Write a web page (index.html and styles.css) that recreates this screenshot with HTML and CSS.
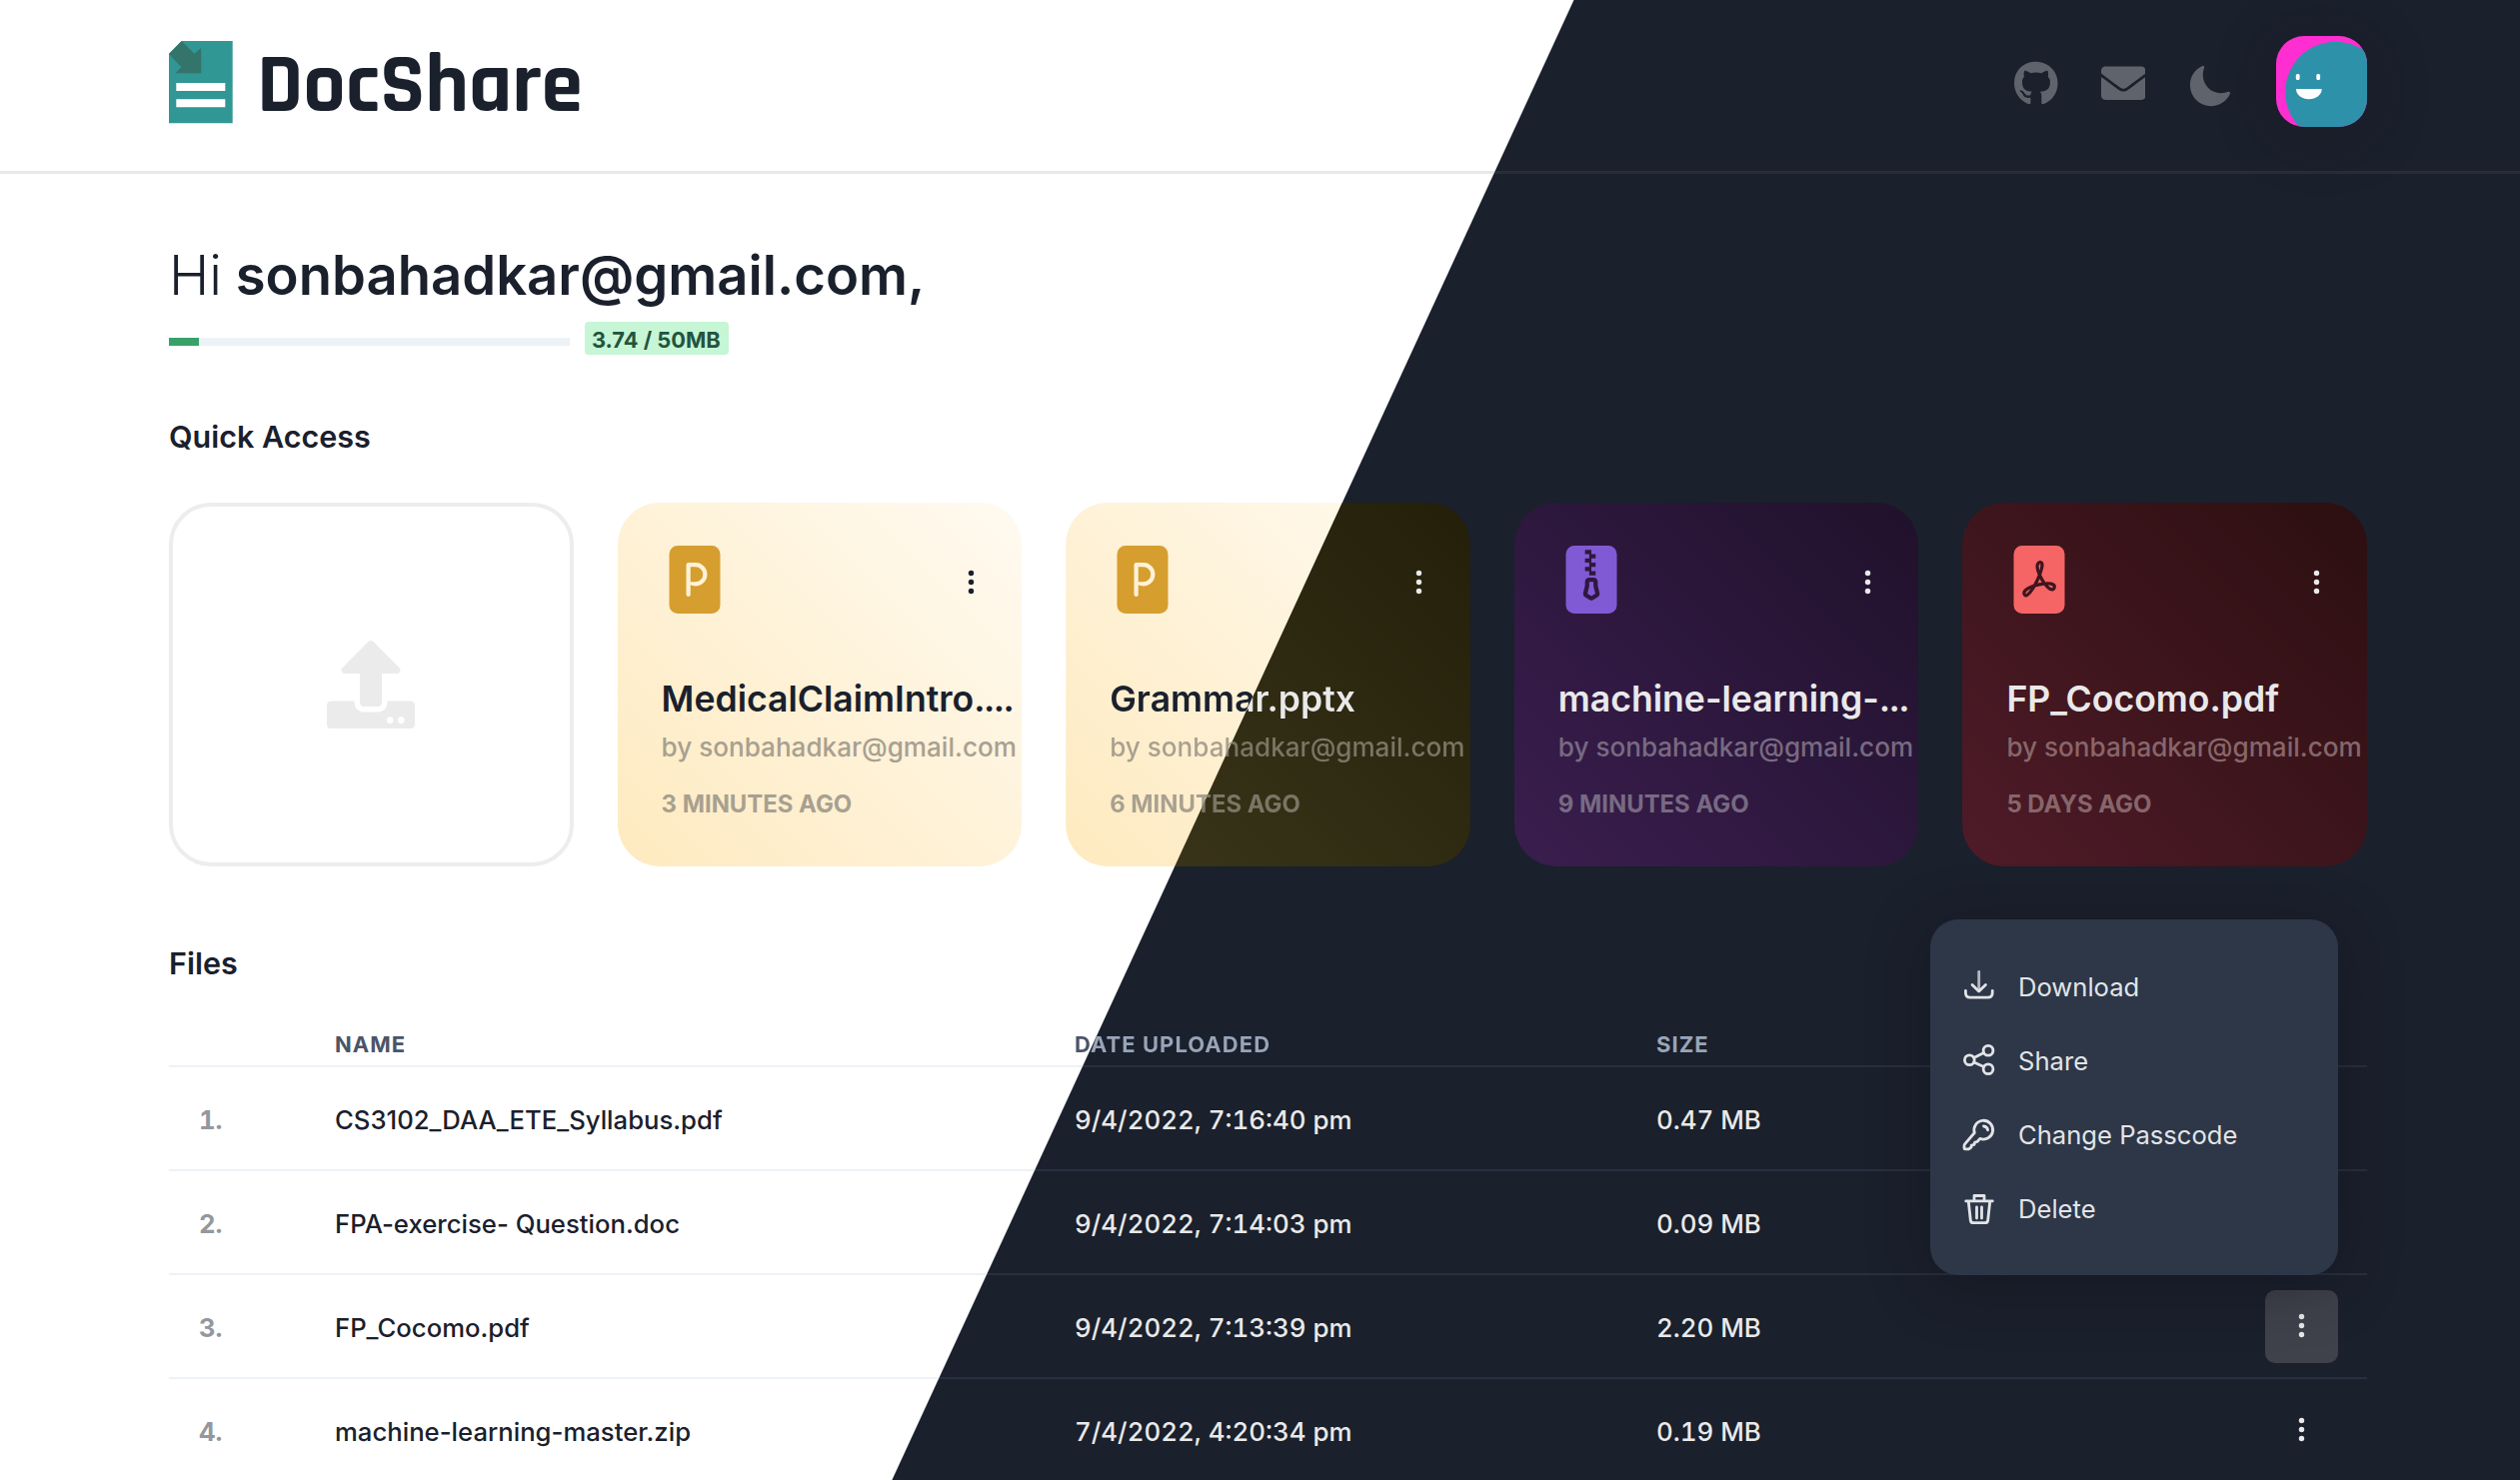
FILE: index.html
```html
<!DOCTYPE html>
<html lang="en">
<head>
<meta charset="utf-8">
<title>DocShare</title>
<link rel="stylesheet" href="styles.css">
</head>
<body>
<svg class="sprite" aria-hidden="true">
  <symbol id="dots" viewBox="0 0 16 16"><circle cx="8" cy="3" r="1.5"/><circle cx="8" cy="8" r="1.5"/><circle cx="8" cy="13" r="1.5"/></symbol>
  <symbol id="ppt" viewBox="0 0 16 16">
    <path fill-rule="evenodd" d="M4 0h8a2 2 0 0 1 2 2v12a2 2 0 0 1-2 2H4a2 2 0 0 1-2-2V2a2 2 0 0 1 2-2zM6.5 4a.5.5 0 0 0-.5.5V11.500a.5.5 0 0 0 1 0V9.236c.314.171.68.264 1.188.264a2.75 2.75 0 1 0 0-5.500H6.500zM8.188 8.500H7V5h1.188a1.750 1.750 0 1 1 0 3.500z"/>
  </symbol>
</svg>

<header class="header">
  <a class="brand">
    <svg class="brand-mark" viewBox="0 0 64 82.500">
      <path fill="#319795" d="M12.700 0H63.700V82.300H0V12.700z"/>
      <path fill="#33756a" d="M12.700 0 25.300 12.700 32.300 7V32.300H6.300L12.300 26.300 0 13z"/>
      <path fill="#fff" d="M7.300 42h49v8h-49zM7.300 58.300h49v8h-49z"/>
    </svg>
    <span class="brand-name">DocShare</span>
  </a>
  <nav class="nav">
    <svg class="nav-github" viewBox="0 0 496 512"><path d="M165.9 397.4c0 2-2.3 3.6-5.2 3.6-3.3.3-5.6-1.3-5.600-3.600 0-2 2.300-3.600 5.200-3.600 3-.3 5.600 1.300 5.600 3.600zm-31.100-4.500c-.7 2 1.300 4.300 4.300 4.900 2.600 1 5.600 0 6.200-2s-1.300-4.300-4.300-5.200c-2.600-.7-5.500.3-6.200 2.300zm44.200-1.700c-2.900.7-4.900 2.600-4.600 4.900.3 2 2.900 3.300 5.900 2.600 2.900-.7 4.900-2.600 4.600-4.600-.3-1.900-3-3.200-5.900-2.900zM244.800 8C106.100 8 0 113.300 0 252c0 110.900 69.800 205.800 169.500 239.200 12.800 2.300 17.300-5.600 17.300-12.100 0-6.200-.3-40.400-.3-61.400 0 0-70 15-84.700-29.800 0 0-11.400-29.100-27.800-36.600 0 0-22.900-15.700 1.600-15.400 0 0 24.900 2 38.600 25.800 21.900 38.600 58.600 27.500 72.900 20.900 2.300-16 8.800-27.100 16-33.700-55.900-6.200-112.300-14.300-112.300-110.500 0-27.500 7.600-41.300 23.600-58.900-2.600-6.500-11.100-33.300 2.600-67.900 20.900-6.500 69 27 69 27 20-5.600 41.500-8.500 62.800-8.500s42.800 2.900 62.800 8.500c0 0 48.100-33.600 69-27 13.700 34.700 5.200 61.400 2.600 67.900 16 17.700 25.800 31.500 25.800 58.900 0 96.500-58.900 104.200-114.800 110.500 9.200 7.900 17 22.900 17 46.400 0 33.700-.3 75.400-.3 83.600 0 6.500 4.600 14.400 17.300 12.100C428.200 457.800 496 362.900 496 252 496 113.300 383.500 8 244.800 8z"/></svg>
    <svg class="nav-mail" viewBox="0 0 512 512"><path d="M502.300 190.800c3.900-3.100 9.700-.2 9.700 4.700V400c0 26.500-21.500 48-48 48H48c-26.500 0-48-21.500-48-48V195.600c0-5 5.700-7.800 9.700-4.700 22.400 17.400 52.100 39.500 154.100 113.600 21.100 15.400 56.700 47.800 92.200 47.600 35.700.3 72-32.800 92.300-47.600 102-74.100 131.600-96.300 154-113.700zM256 320c23.200.4 56.600-29.200 73.400-41.400 132.700-96.300 142.800-104.700 173.400-128.700 5.800-4.500 9.200-11.500 9.200-18.900v-19c0-26.500-21.500-48-48-48H48c-26.500 0-48 21.500-48 48v19c0 7.400 3.400 14.300 9.200 18.900 30.600 23.900 40.700 32.400 173.400 128.700 16.800 12.200 50.200 41.800 73.400 41.400z"/></svg>
    <svg class="nav-moon" viewBox="0 0 512 512"><path d="M264 480A232 232 0 0132 248c0-94 54-178.280 137.610-214.670a16 16 0 0121.060 21.060C181.070 76.430 176 104.660 176 136c0 110.280 89.720 200 200 200 31.340 0 59.570-5.070 81.610-14.670a16 16 0 0121.060 21.060C442.280 426 358 480 264 480z"/></svg>
    <svg class="avatar" viewBox="0 0 91 91">
      <rect width="91" height="91" fill="#ff2ed0"/>
      <circle cx="59.500" cy="56" r="50.300" fill="#2e91aa"/>
      <rect x="19.800" y="38" width="3.800" height="6" rx="1.500" fill="#fff"/>
      <rect x="40.300" y="38" width="3.800" height="6" rx="1.500" fill="#fff"/>
      <path d="M20 53H45.700A12.850 10.300 0 0 1 20 53z" fill="#fff"/>
    </svg>
  </nav>
</header>
<div class="header-line"></div>

<main class="main">
  <h1 class="greeting"><span class="greeting-hi">Hi</span> sonbahadkar@gmail.com,</h1>
  <div class="storage">
    <div class="meter"><div class="meter-fill" style="width:7.4%"></div></div>
    <span class="badge">3.74 / 50MB</span>
  </div>

  <h2 class="section-title">Quick Access</h2>
  <section class="cards">
    <button class="upload">
      <svg viewBox="0 0 512 512"><path d="M296 384h-80c-13.300 0-24-10.700-24-24V192h-87.700c-17.800 0-26.700-21.500-14.100-34.100L242.300 5.700c7.500-7.500 19.800-7.500 27.300 0l152.200 152.200c12.600 12.600 3.700 34.100-14.100 34.100H320v168c0 13.300-10.700 24-24 24zm216-8v112c0 13.300-10.700 24-24 24H24c-13.300 0-24-10.700-24-24V376c0-13.300 10.700-24 24-24h136v8c0 30.900 25.100 56 56 56h80c30.900 0 56-25.100 56-56v-8h136c13.300 0 24 10.700 24 24zm-124 88c0-11-9-20-20-20s-20 9-20 20 9 20 20 20 20-9 20-20zm64 0c0-11-9-20-20-20s-20 9-20 20 9 20 20 20 20-9 20-20z"/></svg>
    </button>
    <article class="card card-ppt">
      <div class="card-top"><svg class="file-icon"><use href="#ppt"/></svg><svg class="dots"><use href="#dots"/></svg></div>
      <h3 class="card-title">MedicalClaimIntro<span class="clip-dots">....</span></h3>
      <p class="card-owner">by sonbahadkar@gmail.com</p>
      <p class="card-time">3 MINUTES AGO</p>
    </article>
    <article class="card card-split">
      <div class="card-top"><svg class="file-icon"><use href="#ppt"/></svg><svg class="dots"><use href="#dots"/></svg></div>
      <h3 class="card-title">Grammar.pptx</h3>
      <p class="card-owner">by sonbahadkar@gmail.com</p>
      <p class="card-time">6 MINUTES AGO</p>
    </article>
    <article class="card card-zip dark">
      <div class="card-top">
        <svg class="file-icon" viewBox="0 0 16 16"><path d="M8.500 9.438V8.500h-1v.938a1 1 0 0 1-.03.243l-.4 1.598.93.62.93-.62-.4-1.598a1 1 0 0 1-.03-.243z"/><path fill-rule="evenodd" d="M4 0h8a2 2 0 0 1 2 2v12a2 2 0 0 1-2 2H4a2 2 0 0 1-2-2V2a2 2 0 0 1 2-2zm2.500 8.500v.938l-.4 1.599a1 1 0 0 0 .416 1.074l.93.62a1 1 0 0 0 1.109 0l.93-.62a1 1 0 0 0 .415-1.074l-.4-1.599V8.500a1 1 0 0 0-1-1h-1a1 1 0 0 0-1 1zm1-5.500h-1v1h1v1h-1v1h1v1H9V6H8V5h1V4H8V3h1V2H8V1H6.500v1h1v1z"/></svg>
        <svg class="dots"><use href="#dots"/></svg>
      </div>
      <h3 class="card-title">machine-learning-<span class="clip-dots">...</span></h3>
      <p class="card-owner">by sonbahadkar@gmail.com</p>
      <p class="card-time">9 MINUTES AGO</p>
    </article>
    <article class="card card-pdf dark">
      <div class="card-top">
        <svg class="file-icon" viewBox="0 0 16 16"><path d="M5.523 10.424c.14-.082.293-.162.459-.238a7.878 7.878 0 0 1-.45.606c-.28.337-.498.516-.635.572a.266.266 0 0 1-.035.012.282.282 0 0 1-.026-.044c-.056-.11-.054-.216.04-.36.106-.165.319-.354.647-.548zm2.455-1.647c-.119.025-.237.05-.356.078a21.035 21.035 0 0 0 .5-1.050 11.960 11.960 0 0 0 .51.858c-.217.032-.436.07-.654.114zm2.525.939a3.888 3.888 0 0 1-.435-.41c.228.005.434.022.612.054.317.057.466.147.518.209a.095.095 0 0 1 .026.064.436.436 0 0 1-.06.2.307.307 0 0 1-.094.124.107.107 0 0 1-.069.015c-.09-.003-.258-.066-.498-.256zM8.278 4.970c-.04.244-.108.524-.2.829a4.860 4.860 0 0 1-.089-.346c-.076-.353-.087-.63-.046-.822.038-.177.11-.248.196-.283a.517.517 0 0 1 .145-.04c.013.03.028.092.032.198.005.122-.007.277-.038.465z"/><path fill-rule="evenodd" d="M4 0h8a2 2 0 0 1 2 2v12a2 2 0 0 1-2 2H4a2 2 0 0 1-2-2V2a2 2 0 0 1 2-2zm.165 11.668c.09.18.23.343.438.419.207.075.412.04.58-.03.318-.13.635-.436.933-.794.333-.401.683-.927 1.021-1.510a11.640 11.640 0 0 1 1.997-.406c.3.383.61.713.91.95.28.22.603.403.934.417a.856.856 0 0 0 .51-.138c.155-.101.27-.247.354-.416.09-.181.145-.37.138-.563a.844.844 0 0 0-.2-.518c-.226-.27-.596-.4-.96-.465a5.760 5.760 0 0 0-1.335-.05 10.954 10.954 0 0 1-.98-1.686c.25-.66.437-1.284.52-1.794.036-.218.055-.426.048-.614a1.238 1.238 0 0 0-.127-.538.7.7 0 0 0-.477-.365c-.202-.043-.41 0-.601.077-.377.15-.576.47-.651.823-.073.34-.04.736.046 1.136.088.406.238.848.43 1.295a19.707 19.707 0 0 1-1.062 2.227 7.662 7.662 0 0 0-1.482.645c-.37.22-.699.48-.897.787-.21.326-.275.714-.08 1.103z"/></svg>
        <svg class="dots"><use href="#dots"/></svg>
      </div>
      <h3 class="card-title">FP_Cocomo.pdf</h3>
      <p class="card-owner">by sonbahadkar@gmail.com</p>
      <p class="card-time">5 DAYS AGO</p>
    </article>
  </section>

  <h2 class="section-title files-title">Files</h2>
  <section class="table">
    <div class="row head"><span></span><span>NAME</span><span class="split-label">DATE UPLOADED</span><span class="dark-label">SIZE</span><span></span></div>
    <div class="rule"></div>
    <div class="row"><span class="index">1.</span><span>CS3102_DAA_ETE_Syllabus.pdf</span><span class="num dark">9/4/2022, 7:16:40 pm</span><span class="num dark">0.47 MB</span></div>
    <div class="rule"></div>
    <div class="row"><span class="index">2.</span><span>FPA-exercise- Question.doc</span><span class="num dark">9/4/2022, 7:14:03 pm</span><span class="num dark">0.09 MB</span></div>
    <div class="rule"></div>
    <div class="row">
      <span class="index">3.</span><span>FP_Cocomo.pdf</span><span class="num dark">9/4/2022, 7:13:39 pm</span><span class="num dark">2.20 MB</span>
      <div class="action active dark">
        <svg class="dots"><use href="#dots"/></svg>
        <div class="menu">
          <div class="menu-item"><svg viewBox="0 0 36 36"><path opacity=".75" d="M18.700 2.500V20"/><path d="M12 15.500 18.700 22 25.400 15.500M5.400 21.500V23.500Q5.400 28.200 10 28.200H27.600Q32.200 28.200 32.200 23.500V21.500"/></svg>Download</div>
          <div class="menu-item"><svg viewBox="0 0 36 36"><circle cx="9.300" cy="16.700" r="4.900"/><circle cx="28" cy="7.200" r="4.900"/><circle cx="28" cy="25.700" r="4.900"/><path d="M13.700 14.500 23.600 9.500M13.700 19 23.600 23.500"/></svg>Share</div>
          <div class="menu-item"><svg viewBox="0 0 36 36"><path d="M14.300 15.500 4.600 26.800Q4 27.500 4 28.500V31Q4 31.900 5 31.900H8.500L11.200 29.800V28L14 27.400 14.700 25 17 24.500 19.800 21.400A9.400 9.400 0 1 0 14.300 15.500zM23.500 9Q27 9.500 27.600 12.800"/></svg>Change Passcode</div>
          <div class="menu-item"><svg viewBox="0 0 36 36"><path d="M5.700 9.900H32.300M14 9.500V4.500H24V9.500M8.300 10.500 10.300 29Q10.600 31.700 13 31.700H25Q27.400 31.700 27.700 29L29.700 10.500M16.500 16V27M21.500 16V27"/></svg>Delete</div>
        </div>
      </div>
    </div>
    <div class="rule"></div>
    <div class="row"><span class="index">4.</span><span>machine-learning-master.zip</span><span class="num dark">7/4/2022, 4:20:34 pm</span><span class="num dark">0.19 MB</span><div class="action dark"><svg class="dots"><use href="#dots"/></svg></div></div>
  </section>
</main>
</body>
</html>
```
FILE: styles.css
```css
/* The page shows the light theme left of a slanted seam and the dark theme
   right of it. Anything crossing the seam is painted with a viewport-fixed
   gradient whose hard stop lies on that seam. */
:root {
  --seam-angle: 114.73deg;
  --seam: 1429.6px;
  --seam-end: 1430.6px;
  --ink: #1a202c;
  --muted: #a8a090;
}

.dark {
  --ink: #e9e9ea;
}

* {
  box-sizing: border-box;
  margin: 0;
}

body {
  height: 1481px;
  overflow: hidden;
  font-family: "Inter", sans-serif;
  color: var(--ink);
  background: linear-gradient(var(--seam-angle), #fff var(--seam), #1a202c var(--seam-end)) fixed;
}

svg {
  display: block;
  flex: none;
  fill: currentColor;
}

.sprite {
  display: none;
}

/* Header */
.header {
  display: flex;
  justify-content: space-between;
  align-items: center;
  height: 171px;
  padding: 0 153px 6px 169px;
}

.brand {
  display: flex;
  align-items: center;
  gap: 24px;
}

.brand-mark {
  width: 64px;
  height: 82.5px;
}

.brand-name {
  margin-top: 8px;
  font: 700 83.6px/90px "Rajdhani", "Roboto", sans-serif;
}

.nav {
  display: flex;
  align-items: center;
  gap: 43px;
  color: #5f636b;
}

.nav-github {
  width: 43.6px;
  height: 45px;
  margin-top: 2px;
}

.nav-mail {
  width: 44.5px;
  height: 44.5px;
  margin-top: 2px;
}

.nav-moon {
  width: 46px;
  height: 46px;
  margin: 6px 0 0 -1px;
}

.avatar {
  width: 91px;
  height: 91px;
  margin-bottom: 2px;
  border-radius: 28px;
  box-shadow: 0 8px 60px rgba(25, 22, 30, 0.3);
}

.header-line {
  height: 3px;
  background: linear-gradient(var(--seam-angle), #e8e8e8 var(--seam), #282d38 var(--seam-end)) fixed;
}

/* Greeting and storage */
.main {
  padding: 68px 153px 0 169px;
}

.greeting {
  font-size: 54.4px;
  line-height: 66px;
  font-weight: 600;
}

.greeting-hi {
  font-weight: 300;
}

.storage {
  display: flex;
  gap: 15px;
  height: 33px;
  margin-top: 14px;
}

.meter {
  width: 401px;
  height: 8px;
  margin-top: 16px;
  background: #edf2f7;
}

.meter-fill {
  height: 100%;
  background: #38a169;
}

.badge {
  padding: 0 8px 0 7px;
  font-size: 21.8px;
  line-height: 36px;
  font-weight: 700;
  color: #22543d;
  background: #c6f6d5;
  border-radius: 4px;
}

.section-title {
  margin-top: 64px;
  font-size: 30.5px;
  line-height: 36px;
  font-weight: 600;
}

.files-title {
  margin-top: 79px;
}

/* Quick access cards */
.cards {
  display: grid;
  grid-template-columns: repeat(5, 1fr);
  gap: 44px;
  height: 364px;
  margin-top: 48px;
}

.upload {
  display: flex;
  align-items: center;
  justify-content: center;
  border: 4px solid #ededed;
  border-radius: 42px;
  background: #fff;
  color: #ebebeb;
}

.upload svg {
  width: 88px;
  height: 88px;
}

.card {
  position: relative;
  min-width: 0;
  padding: 43px 0 0 44px;
  border-radius: 42px;
  white-space: nowrap;
}

.card-ppt,
.card-split {
  --accent: #d69e2e;
}

.card-ppt {
  background: linear-gradient(45deg, #feeabf, #fffaf1);
}

.card-zip {
  --accent: #805ad5;
  --muted: #786a82;
  background: linear-gradient(45deg, #3a1e4f, #20112b);
}

.card-pdf {
  --accent: #f56565;
  --muted: #87666a;
  background: linear-gradient(45deg, #4f1b29, #2c0f10);
}

/* The two themed halves of the card that lies across the seam */
.card-split::before,
.card-split::after {
  content: "";
  position: absolute;
  z-index: -1;
  inset: 0;
  border-radius: 42px;
}

.card-split::before {
  background: linear-gradient(45deg, #feeabf, #fffaf1);
  clip-path: polygon(0 0, 277px 0, 109.500px 100%, 0 100%);
}

.card-split::after {
  background: linear-gradient(45deg, #3c371b, #231f09);
  clip-path: polygon(276.500px 0, 100% 0, 100% 100%, 109px 100%);
}

.card-top {
  display: flex;
  justify-content: space-between;
  align-items: center;
  padding-right: 36.5px;
}

.file-icon {
  width: 68px;
  height: 68px;
  margin-left: -1px;
  color: var(--accent);
}

.dots {
  width: 29px;
  height: 29px;
  color: var(--ink);
}

.card-top .dots {
  margin-top: 4px;
}

.card-split .dots {
  color: #e9e9ea;
}

.card-title {
  margin-top: 64px;
  font-size: 35.6px;
  line-height: 44px;
  font-weight: 600;
  color: var(--ink);
}

.clip-dots {
  letter-spacing: -1.6px;
}

.card-owner {
  margin-top: 7px;
  font-size: 26.1px;
  line-height: 37px;
  font-weight: 500;
  color: var(--muted);
}

.card-time {
  margin-top: 23px;
  font-size: 23.9px;
  line-height: 32px;
  font-weight: 700;
  color: var(--muted);
}

.card-split .card-title,
.card-split .card-owner,
.card-split .card-time,
.split-label {
  color: transparent;
  background: linear-gradient(var(--seam-angle), var(--from) var(--seam), var(--to) var(--seam-end)) fixed;
  -webkit-background-clip: text;
  background-clip: text;
}

.card-split .card-title {
  --from: #1a202c;
  --to: #e9e9ea;
}

.card-split .card-owner,
.card-split .card-time {
  --from: #a8a090;
  --to: #7b7565;
}

/* Files table */
.table {
  margin-top: 2px;
}

.row {
  display: grid;
  grid-template-columns: 166px 740px 582px 1fr auto;
  align-items: center;
  height: 102px;
  padding-right: 29px;
  font-size: 25.7px;
  font-weight: 500;
}

.row > span {
  padding-top: 2px;
  color: var(--ink);
}

.row > .index {
  padding-left: 30px;
  font-weight: 700;
  font-variant-numeric: tabular-nums;
  color: #94979d;
}

.row > .num {
  font-size: 25.9px;
  font-variant-numeric: lining-nums tabular-nums;
}

.head {
  align-items: end;
  height: 82px;
  padding-bottom: 7px;
  font-size: 22px;
  line-height: 28px;
  font-weight: 700;
  letter-spacing: 1.05px;
}

.head > span {
  padding-top: 0;
  color: #4a5568;
}

.head > .dark-label {
  color: #98a5b8;
}

.head > .split-label {
  --from: #4a5568;
  --to: #98a5b8;
  color: transparent;
}

.rule {
  height: 2px;
  background: linear-gradient(var(--seam-angle), #edf2f7 var(--seam), #283040 var(--seam-end)) fixed;
}

.action {
  position: relative;
  display: flex;
  align-items: center;
  justify-content: center;
  width: 73px;
  height: 73px;
  border-radius: 10px;
}

.action .dots {
  margin-bottom: 2px;
}

.action.active {
  background: #40424b;
}

/* Row menu */
.menu {
  position: absolute;
  right: 0;
  bottom: calc(100% + 15px);
  width: 408px;
  height: 356px;
  padding: 31px 30px 0;
  border-radius: 28px;
  background: #2d3748;
  box-shadow: 0 10px 60px rgba(18, 16, 24, 0.45);
}

.menu-item {
  display: flex;
  align-items: center;
  gap: 22px;
  height: 74px;
  font-size: 25.6px;
  font-weight: 400;
  color: #e2e4e7;
}

.menu-item svg {
  width: 36px;
  height: 36px;
  fill: none;
  stroke: currentColor;
  stroke-width: 2.8;
  stroke-linecap: round;
  stroke-linejoin: round;
}
```
